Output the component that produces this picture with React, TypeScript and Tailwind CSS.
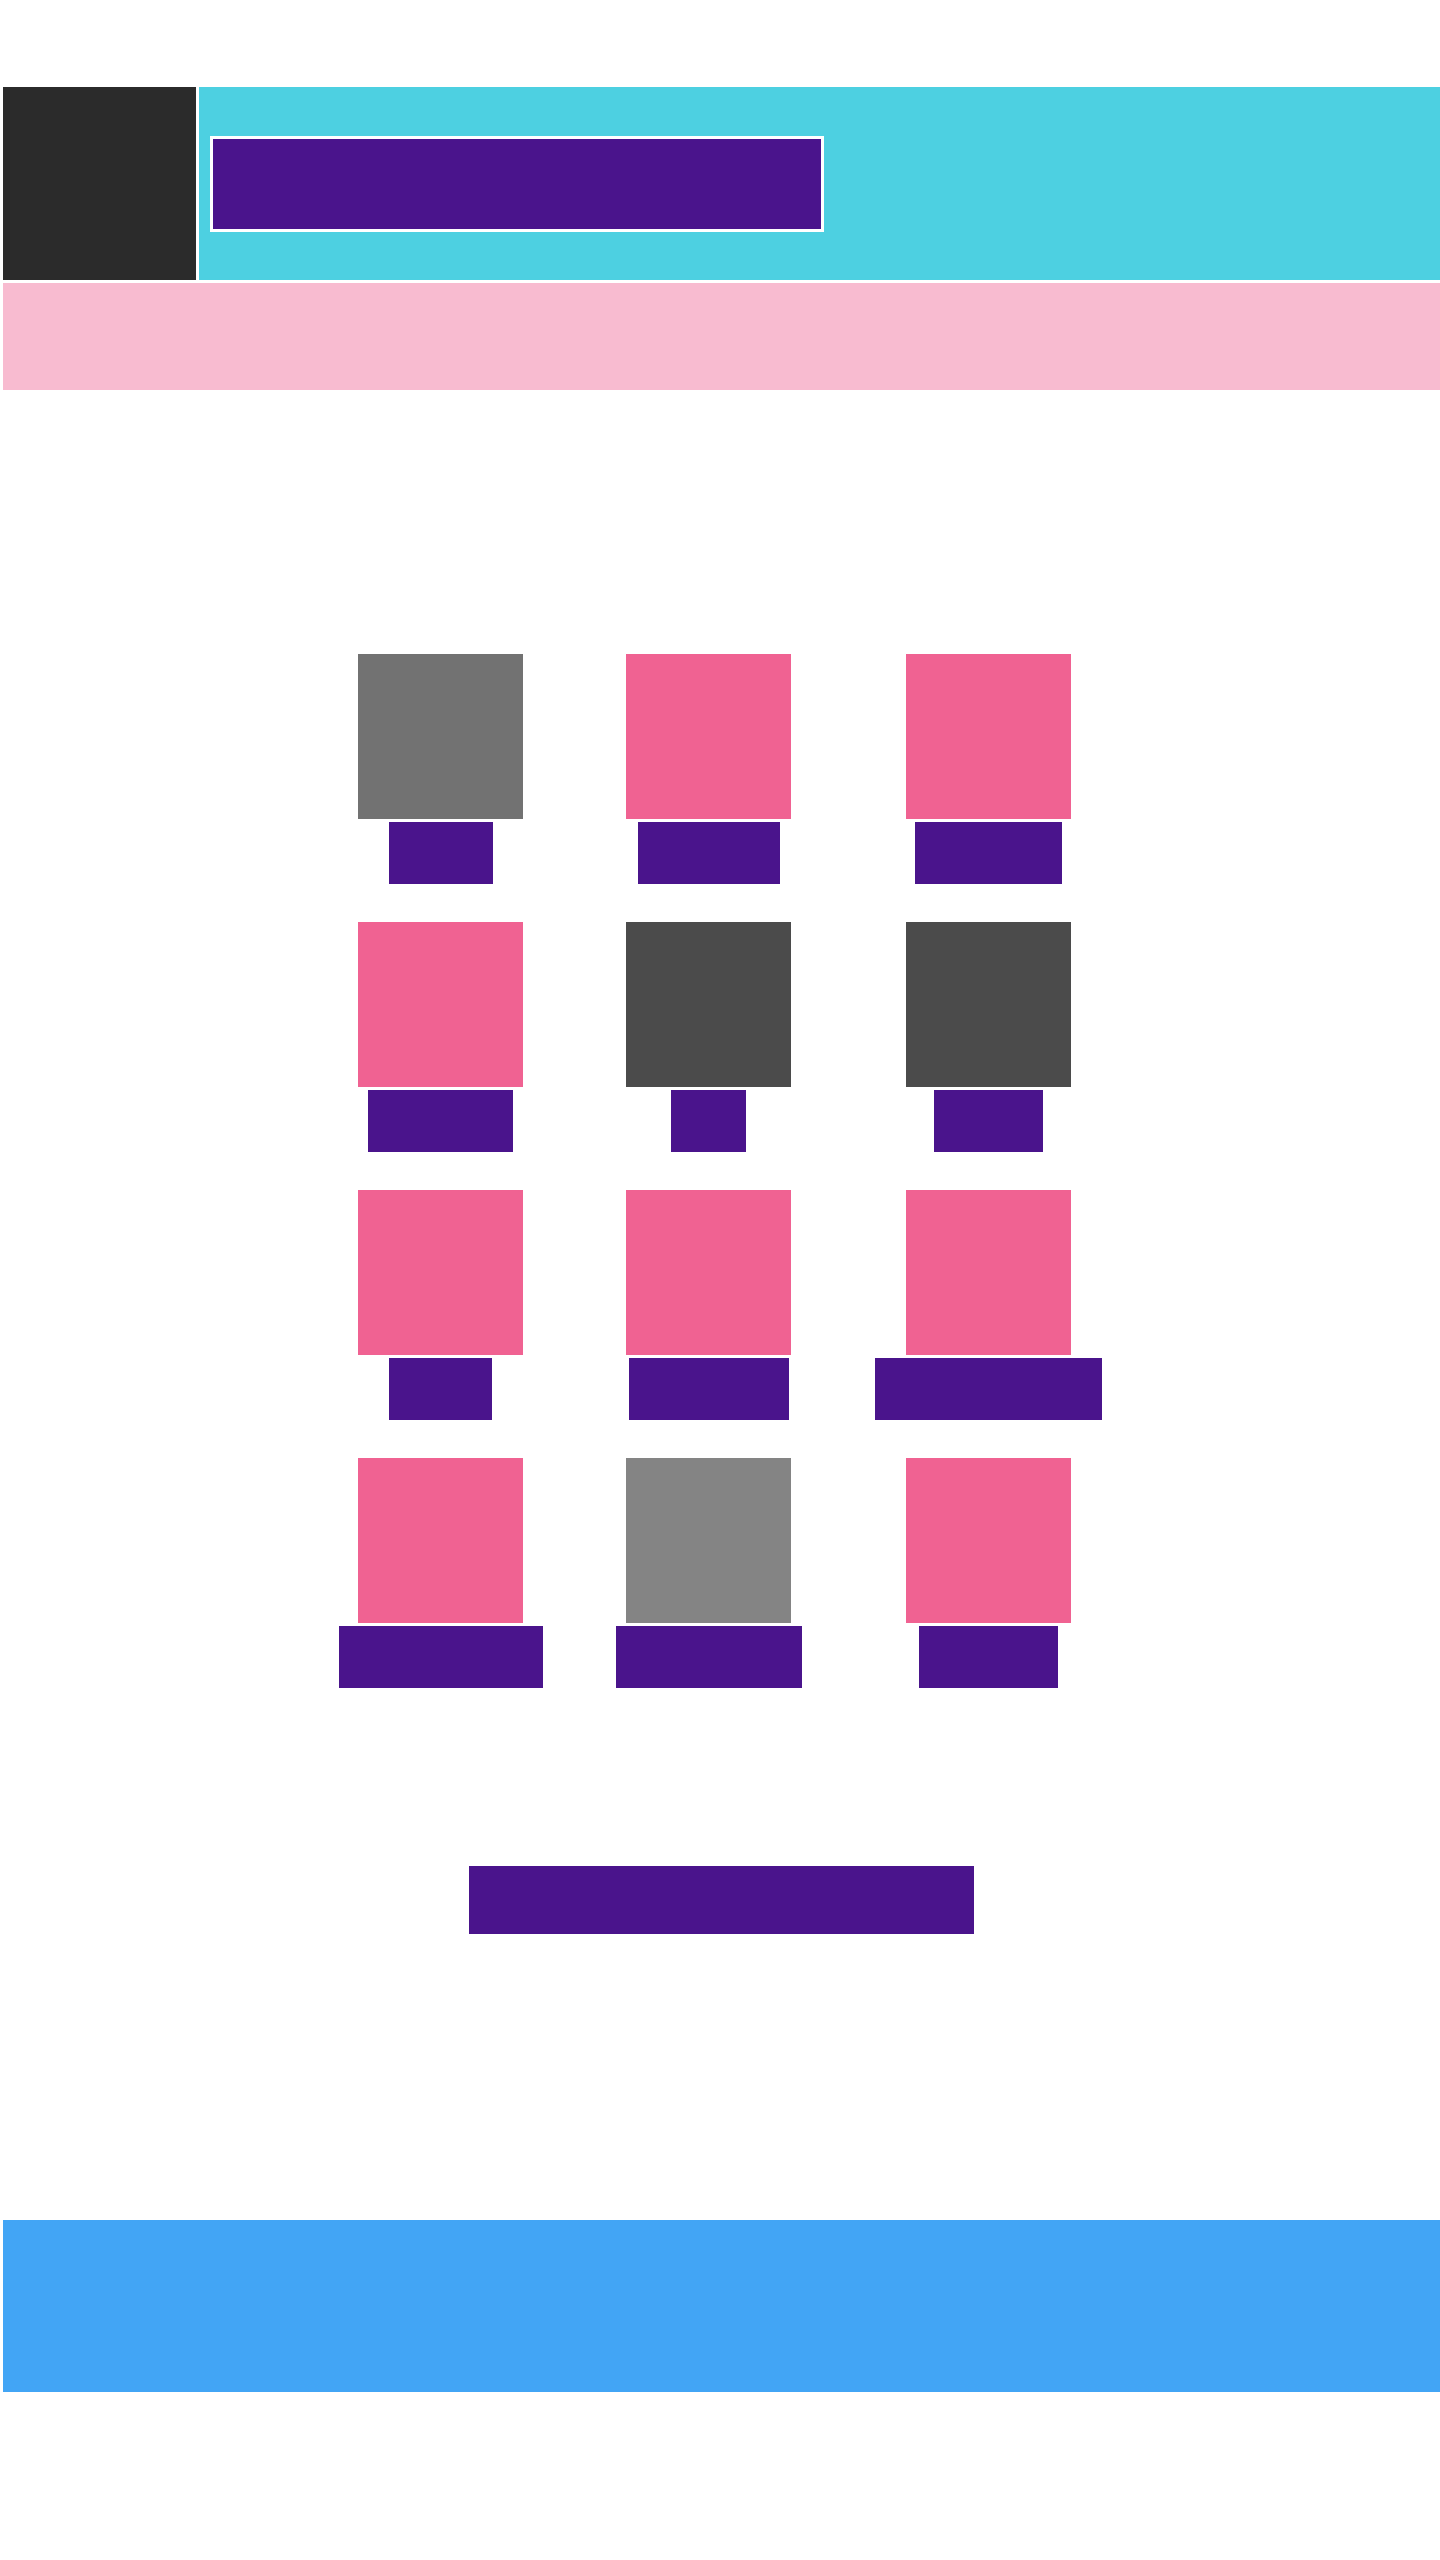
const tiles = [
  { tone: "bg-[#727272]", label: "w-[104px]" },
  { tone: "bg-[#f06292]", label: "w-[142px]" },
  { tone: "bg-[#f06292]", label: "w-[147px]" },
  { tone: "bg-[#f06292]", label: "w-[145px]" },
  { tone: "bg-[#4b4b4b]", label: "w-[75px]" },
  { tone: "bg-[#4b4b4b]", label: "w-[109px]" },
  { tone: "bg-[#f06292]", label: "w-[103px]" },
  { tone: "bg-[#f06292]", label: "w-[160px]" },
  { tone: "bg-[#f06292]", label: "w-[227px]" },
  { tone: "bg-[#f06292]", label: "w-[204px]" },
  { tone: "bg-[#848484]", label: "w-[186px]" },
  { tone: "bg-[#f06292]", label: "w-[139px]" },
];

function Tile({ tone, label }: { tone: string; label: string }) {
  return (
    <div className="flex flex-col items-center gap-[3px]">
      <div className={`h-[165px] w-[165px] ${tone}`} />
      <div className={`h-[62px] bg-[#4a148c] ${label}`} />
    </div>
  );
}

export default function App() {
  return (
    <div className="min-h-[2560px] bg-white pl-[3px] pt-[87px] font-['Roboto',sans-serif]">
      <header className="flex gap-[3px]">
        <div className="h-[193px] w-[193px] shrink-0 bg-[#2b2b2b]" />
        <div className="flex h-[193px] flex-1 items-center bg-[#4dd0e1] pl-[11px]">
          <div className="h-[96px] w-[614px] border-[3px] border-white bg-[#4a148c]" />
        </div>
      </header>
      <div className="mt-[3px] h-[107px] bg-[#f8bbd0]" />

      <main className="mt-[264px] flex justify-center pr-[3px]">
        <div className="grid grid-cols-[auto_auto_auto] gap-x-[73px] gap-y-[38px]">
          {tiles.map((t, i) => (
            <Tile key={i} tone={t.tone} label={t.label} />
          ))}
        </div>
      </main>

      <div className="mt-[178px] flex justify-center">
        <button className="h-[68px] w-[505px] bg-[#4a148c]" />
      </div>

      <footer className="mt-[286px] h-[172px] bg-[#42a5f5]" />
    </div>
  );
}
